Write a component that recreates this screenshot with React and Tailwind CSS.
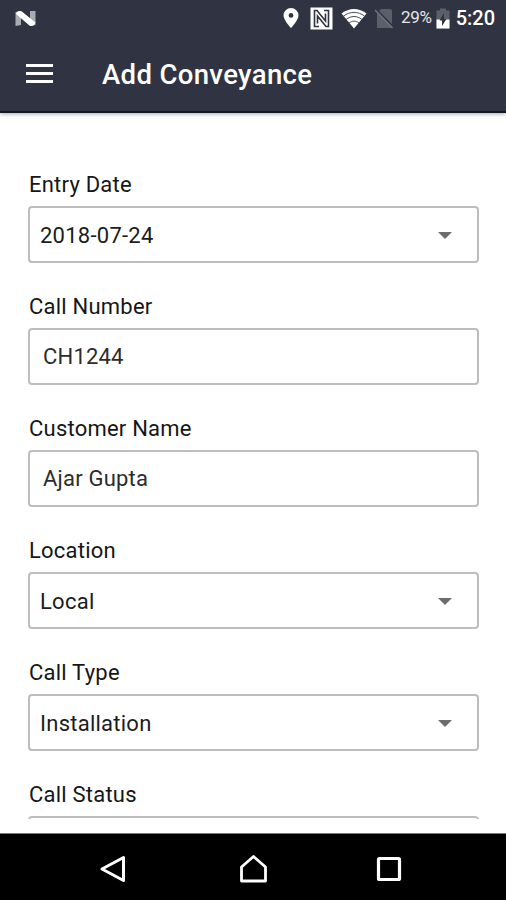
import React, { useState } from "react";

const fields = [
  { label: "Entry Date", value: "2018-07-24", type: "select" },
  { label: "Call Number", value: "CH1244", type: "text" },
  { label: "Customer Name", value: "Ajar Gupta", type: "text" },
  { label: "Location", value: "Local", type: "select" },
  { label: "Call Type", value: "Installation", type: "select" },
  { label: "Call Status", value: "", type: "select" },
];

const StatusBar = () => (
  <div className="flex h-9 items-center pl-[15px] pr-[11px]">
    <svg className="h-[17px] w-[21px]" viewBox="0 0 21 17">
      <path d="M0.5 2L6 1v14L0.5 16zM15 1h5.500v14l-5.500 1z" fill="#a9abb3" />
      <path d="M1 4Q2 0.500 6.500 1.200L20.500 12.500Q19 16.500 15 16z" fill="#fff" />
    </svg>
    <div className="ml-auto flex items-center">
      <svg className="h-[22px] w-4" viewBox="0 0 16 22">
        <path fillRule="evenodd" d="M8 1a7.500 7.500 0 0 0-7.500 7.500C.5 13 8 21 8 21s7.500-8 7.500-12.500A7.500 7.500 0 0 0 8 1zm0 5a2.400 2.400 0 1 1 0 4.800A2.400 2.400 0 0 1 8 6z" fill="#fff" />
      </svg>
      <svg className="ml-[11px] h-[23px] w-[23px]" viewBox="0 0 23 23">
        <path d="M0.500 0.500h22v22h-22z" fill="#fff" />
        <path d="M9 19.500H4.500V3.500H7L15.500 14V6.500M14 3.500h4.500v16H16L7.500 9v7.500" fill="none" stroke="#303442" strokeWidth="1.600" />
      </svg>
      <svg className="ml-[8px] h-[21px] w-[26px]" viewBox="0 0 26 21">
        <path d="M0.500 5.500C8-.5 18-.5 25.500 5.500L13 20.500z" fill="#fff" />
        <path d="M2.500 8C9 3.200 17 3.200 23.500 8M5 11.500C10 7.500 16 7.500 21 11.500M8 15c3.500-2.500 6.500-2.500 10 0" fill="none" stroke="#4c505c" strokeWidth="1" />
      </svg>
      <svg className="ml-[7px] h-[21px] w-5" viewBox="0 0 20 21">
        <path d="M7 1h9q2 0 2 2v17H3V5z" fill="#5c5f6a" />
        <path d="M1 0.500L20 19.500" stroke="#303442" strokeWidth="2.200" />
        <path d="M1 2L18.500 20" stroke="#70737d" strokeWidth="1.600" />
      </svg>
      <span className="ml-[7px] text-[17px] tracking-[-0.3px] text-[#e4e5e8]">29%</span>
      <svg className="ml-1 h-[21px] w-[14px]" viewBox="0 0 14 21">
        <path d="M4 0.500h6v2h3.500v18H.5v-18H4z" fill="#5c5f6a" />
        <path d="M.5 11.500h13v9H.5z" fill="#fff" />
        <path d="M8 5L3.500 12.500H6V18l4.500-7H8z" fill="#303442" />
      </svg>
      <span className="ml-[6px] text-[20px] font-medium leading-9 text-white">5:20</span>
    </div>
  </div>
);

const Field = ({ label, value, type }) => {
  const [text, setText] = useState(value);

  return (
    <div className="h-[122px]">
      <label className="block h-[34px] pl-px text-[22px] leading-[26px] tracking-[0.22px] text-[#161616]">{label}</label>
      {type === "select" ? (
        <button className="flex h-[57px] w-full items-center justify-between rounded-[4px] border-2 border-[#bdbdbd] pl-[10px] pr-[25px] pt-px text-left text-[22px] tracking-[0.25px] text-[#1c1c1c]">
          <span>{value}</span>
          <svg className="h-[7px] w-[14px]" viewBox="0 0 14 7">
            <path d="M0 0h14L7 7z" fill="#6c6c6c" />
          </svg>
        </button>
      ) : (
        <input
          className="block h-[57px] w-full rounded-[4px] border-2 border-[#bdbdbd] px-[13px] text-[22px] tracking-[0.2px] text-[#2c2c2c] outline-none"
          value={text}
          onChange={(e) => setText(e.target.value)}
        />
      )}
    </div>
  );
};

const App = () => {
  return (
    <div className="flex h-[900px] w-[506px] flex-col overflow-hidden bg-white font-[Roboto,sans-serif]">
      <header className="z-10 h-[113px] shrink-0 border-b-2 border-[#141724] bg-[#303442] shadow-[0_1px_4px_rgba(0,0,0,0.35)]">
        <StatusBar />
        <div className="flex h-[76px] items-center pl-[26px]">
          <button className="mb-[2px] flex w-[27px] flex-col gap-[5px]">
            <span className="h-[3px] w-full bg-white"></span>
            <span className="h-[3px] w-full bg-white"></span>
            <span className="h-[3px] w-full bg-white"></span>
          </button>
          <h1 className="ml-[49px] pt-[2px] text-[27.500px] font-medium tracking-[0.35px] text-white">Add Conveyance</h1>
        </div>
      </header>

      <main className="h-[706px] shrink-0 overflow-hidden pl-7 pr-[27px] pt-[59px]">
        {fields.map((field) => (
          <Field key={field.label} {...field} />
        ))}
      </main>

      <nav className="mt-[14px] flex flex-1 justify-center border-t border-[#777] bg-black pr-1 pt-5">
        <button className="h-[30px] w-[30px]">
          <svg className="h-[30px] w-[30px]" viewBox="0 0 30 30">
            <path d="M25.500 3.500v23L4 15z" fill="none" stroke="#fff" strokeWidth="3" strokeLinejoin="round" />
          </svg>
        </button>
        <button className="ml-[110px] h-[30px] w-[30px]">
          <svg className="h-[30px] w-[30px]" viewBox="0 0 30 30">
            <path d="M15.500 2.500L27.500 13v14h-24V13z" fill="none" stroke="#fff" strokeWidth="2.800" strokeLinejoin="round" />
          </svg>
        </button>
        <button className="ml-[106px] h-[30px] w-[30px]">
          <svg className="h-[30px] w-[30px]" viewBox="0 0 30 30">
            <rect x="4.500" y="4.500" width="21" height="21" rx="1" fill="none" stroke="#fff" strokeWidth="3.200" />
          </svg>
        </button>
      </nav>
    </div>
  );
};

export default App;
